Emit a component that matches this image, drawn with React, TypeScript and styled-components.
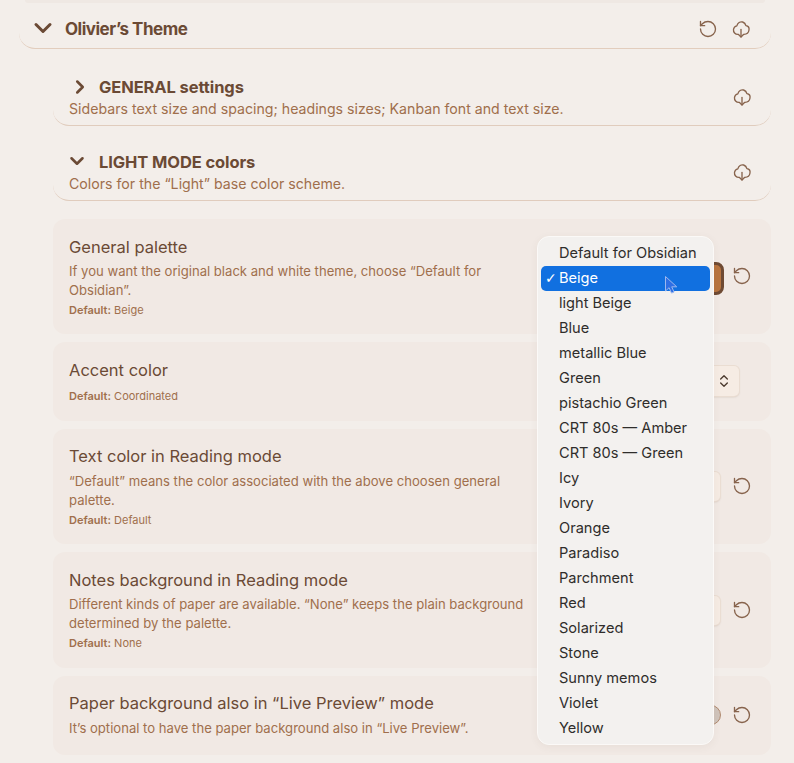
import React, { FC } from 'react'
import styled, { createGlobalStyle } from 'styled-components'
import { ChevronDown, ChevronRight, ChevronsUpDown, RotateCcw } from 'lucide-react'

const PALETTES = [
  'Default for Obsidian', 'Beige', 'light Beige', 'Blue', 'metallic Blue', 'Green', 'pistachio Green',
  'CRT 80s — Amber', 'CRT 80s — Green', 'Icy', 'Ivory', 'Orange', 'Paradiso', 'Parchment', 'Red',
  'Solarized', 'Stone', 'Sunny memos', 'Violet', 'Yellow'
]

const CloudIcon: FC = () => (
  <svg width='20' height='20' viewBox='0 0 24 24' fill='none' stroke='currentColor' strokeWidth='1.6' strokeLinecap='round' strokeLinejoin='round'>
    <path d='M8.5 18.5C5 18.6 2.6 15.8 3 12.6C3.3 10 5 8.6 7 8.2C8 4.6 11 2.8 14 3.6C16 4.2 17.4 5.8 17.9 8C20.4 8.4 22 10.6 21.6 13.2C21.2 16 18.8 18.4 15.5 18.5' />
    <path d='M12 12.5v9' />
    <path d='m9 18.5 3 3 3-3' />
  </svg>
)

const IconButton: FC<{ kind: 'reset' | 'cloud' }> = ({ kind }): JSX.Element => (
  <IconBox>{kind === 'reset' ? <RotateCcw size={20} strokeWidth={1.6} /> : <CloudIcon />}</IconBox>
)

const Setting: FC<{
  title: string
  desc?: string
  fallback?: string
  children: React.ReactNode
}> = ({ title, desc, fallback, children }): JSX.Element => (
  <Card>
    <Info>
      <CardTitle>{title}</CardTitle>
      {desc && <CardDesc>{desc}</CardDesc>}
      {fallback && <DefaultLine $alone={!desc}><b>Default:</b> {fallback}</DefaultLine>}
    </Info>
    <Controls>{children}</Controls>
  </Card>
)

const App: FC = (): JSX.Element => (
  <Page>
    <GlobalStyle />
    <TopEdge />
    <ThemeHeader>
      <IconSlot><ChevronDown size={28} strokeWidth={2.6} /></IconSlot>
      <ThemeTitle>Olivier’s Theme</ThemeTitle>
      <IconRow>
        <IconButton kind='reset' />
        <IconButton kind='cloud' />
      </IconRow>
    </ThemeHeader>
    <Group>
      <SubHeader>
        <SubText>
          <SubTitleRow>
            <SubChevron><ChevronRight size={26} strokeWidth={2.8} /></SubChevron>
            <SubTitle>GENERAL settings</SubTitle>
          </SubTitleRow>
          <SubDesc>Sidebars text size and spacing; headings sizes; Kanban font and text size.</SubDesc>
        </SubText>
        <IconButton kind='cloud' />
      </SubHeader>
      <SubHeader>
        <SubText>
          <SubTitleRow>
            <SubChevron $open><ChevronDown size={26} strokeWidth={2.8} /></SubChevron>
            <SubTitle>LIGHT MODE colors</SubTitle>
          </SubTitleRow>
          <SubDesc>Colors for the “Light” base color scheme.</SubDesc>
        </SubText>
        <IconButton kind='cloud' />
      </SubHeader>
      <Cards>
        <Setting
          title='General palette'
          desc='If you want the original black and white theme, choose “Default for Obsidian”.'
          fallback='Beige'
        >
          <PaletteButton />
          <IconButton kind='reset' />
        </Setting>
        <Setting title='Accent color' fallback='Coordinated'>
          <AccentSelect><ChevronsUpDown size={16} strokeWidth={2} /></AccentSelect>
        </Setting>
        <Setting
          title='Text color in Reading mode'
          desc='“Default” means the color associated with the above choosen general palette.'
          fallback='Default'
        >
          <PlainSelect />
          <IconButton kind='reset' />
        </Setting>
        <Setting
          title='Notes background in Reading mode'
          desc='Different kinds of paper are available. “None” keeps the plain background determined by the palette.'
          fallback='None'
        >
          <PlainSelect />
          <IconButton kind='reset' />
        </Setting>
        <Setting
          title='Paper background also in “Live Preview” mode'
          desc='It’s optional to have the paper background also in “Live Preview”.'
        >
          <Toggle />
          <IconButton kind='reset' />
        </Setting>
      </Cards>
    </Group>

    <Menu>
      {PALETTES.map((name) => (
        <MenuItem key={name} $active={name === 'Beige'}>
          {name === 'Beige' && <Check>✓</Check>}
          {name}
        </MenuItem>
      ))}
    </Menu>
    <Cursor width='15' height='20' viewBox='0 0 15 20'>
      <path d='M1.5 1.5v14.5l3.6-3.3 2.4 5.4 2.6-1.1-2.4-5.2h5z' fill='#2f6fe4' stroke='#9db8ee' strokeWidth='1' />
    </Cursor>
  </Page>
)

const GlobalStyle = createGlobalStyle`
  html, body {
    margin: 0;
    padding: 0;
    background: #f3eeea;
  }
`

const Page = styled.div`
  position: relative;
  height: 763px;
  overflow: hidden;
  box-sizing: border-box;
  padding: 0 23px 0 19px;
  font-family: Inter, "Liberation Sans", sans-serif;
  color: #6b4a35;
`

const TopEdge = styled.div`
  height: 3px;
  margin: 0 6px;
  background: #efe8e3;
  border-radius: 0 0 8px 8px;
`

const ThemeHeader = styled.div`
  display: flex;
  align-items: center;
  height: 46px;
  box-sizing: border-box;
  padding: 7px 20px 0 10px;
  border-bottom: 1px solid #e2cdbd;
  border-radius: 0 0 16px 16px;
`

const IconSlot = styled.div`
  display: flex;
  align-items: center;
  justify-content: center;
  width: 28px;
  height: 28px;
  margin-right: 8px;
  margin-top: -3px;
`

const ThemeTitle = styled.div`
  flex: 1;
  font-size: 17px;
  font-weight: 700;
  letter-spacing: -0.5px;
  color: #6b4a35;
`

const IconRow = styled.div`
  display: flex;
  gap: 13px;
`

const IconBox = styled.div`
  display: flex;
  align-items: center;
  justify-content: center;
  width: 20px;
  height: 20px;
  flex: none;
  color: #87634c;
`

const Group = styled.div`
  margin: 16px 0 0 34px;
`

const SubHeader = styled.div`
  display: flex;
  align-items: center;
  justify-content: space-between;
  box-sizing: border-box;
  height: 61px;
  margin-bottom: 14px;
  padding: 10px 19px 7px 16px;
  border-bottom: 1px solid #e0ccbd;
  border-radius: 0 0 16px 16px;
`

const SubText = styled.div`
  display: flex;
  flex-direction: column;
`

const SubTitleRow = styled.div`
  display: flex;
  align-items: center;
  height: 24px;
`

const SubChevron = styled.div<{ $open?: boolean }>`
  display: flex;
  align-items: center;
  justify-content: center;
  width: 22px;
  height: 24px;
  margin-right: 8px;
  transform: translate(${({ $open }) => ($open ? '-3px, -1px' : '0, 0')});
`

const SubTitle = styled.div`
  font-size: 16.5px;
  font-weight: 700;
  letter-spacing: -0.1px;
  color: #6b4a35;
`

const SubDesc = styled.div`
  font-size: 14.17px;
  line-height: 19px;
  color: #a06f4c;
`

const Cards = styled.div`
  display: flex;
  flex-direction: column;
  gap: 8px;
  margin-top: 18px;
`

const CardTitle = styled.div`
  font-size: 16.5px;
  line-height: 24px;
  color: #6b4a35;
`

const Controls = styled.div`
  display: flex;
  align-items: center;
  justify-content: flex-end;
  gap: 8px;
`

const Card = styled.div`
  display: flex;
  align-items: center;
  justify-content: space-between;
  box-sizing: border-box;
  padding: 16px 19px 17px 16px;
  background: #f1e9e4;
  border-radius: 12px;

  &:nth-child(4) {
    padding-bottom: 18px;
  }

  &:nth-child(4) ${Controls} {
    margin-top: 2px;
  }

  &:nth-child(3) ${CardTitle}, &:nth-child(5) ${CardTitle} {
    margin: -1px 0 4px;
  }
`

const Info = styled.div`
  width: 458px;
`

const CardDesc = styled.div`
  margin-top: 3px;
  font-size: 13.1px;
  line-height: 19px;
  color: #a06f4c;
`

const DefaultLine = styled.div<{ $alone: boolean }>`
  margin-top: ${({ $alone }) => ($alone ? '7px' : '3px')};
  margin-bottom: ${({ $alone }) => ($alone ? '1px' : '0')};
  font-size: 11px;
  line-height: 14px;
  color: #a06f4c;

  b {
    font-weight: 600;
  }
`

const PaletteButton = styled.div`
  width: 170px;
  height: 33px;
  margin-top: 4px;
  box-sizing: border-box;
  background: #b8743f;
  border: 3px solid #6f4a33;
  border-radius: 8px;
`

const AccentSelect = styled.div`
  display: flex;
  align-items: center;
  justify-content: flex-end;
  width: 170px;
  height: 30px;
  margin-right: 13px;
  box-sizing: border-box;
  padding-right: 7px;
  color: #4b3a2e;
  background: #f6ece4;
  border-radius: 5px;
  box-shadow: 0 0 0 1px #eaddd2, 0 1px 2px rgba(110, 80, 60, 0.25);
`

const PlainSelect = styled(AccentSelect)`
  height: 29px;
  margin-right: 4px;
`

const Toggle = styled.div`
  width: 40px;
  height: 20px;
  margin-right: 3px;
  box-sizing: border-box;
  background: #d0c4bb;
  border: 1px solid #b08a6f;
  border-radius: 10px;
`

const Menu = styled.div`
  position: absolute;
  left: 537px;
  top: 236px;
  width: 177px;
  height: 509px;
  box-sizing: border-box;
  padding: 4px 3px;
  background: #f3f1ef;
  border: 1px solid #fbf9f7;
  border-radius: 12px;
  box-shadow: 0 2px 8px rgba(90, 70, 50, 0.06);
  font-size: 14.6px;
  color: #2f2d2b;
`

const MenuItem = styled.div<{ $active: boolean }>`
  position: relative;
  height: 25px;
  line-height: 25px;
  padding-left: 18px;
  border-radius: 5px;
  white-space: nowrap;
  color: ${({ $active }) => ($active ? '#fff' : '#2f2d2b')};
  background: ${({ $active }) => ($active ? '#1170e0' : 'transparent')};
`

const Check = styled.span`
  position: absolute;
  left: 4px;
  font-size: 14px;
  font-family: "DejaVu Sans", sans-serif;
`

const Cursor = styled.svg`
  position: absolute;
  left: 664px;
  top: 275px;
`

export default App
